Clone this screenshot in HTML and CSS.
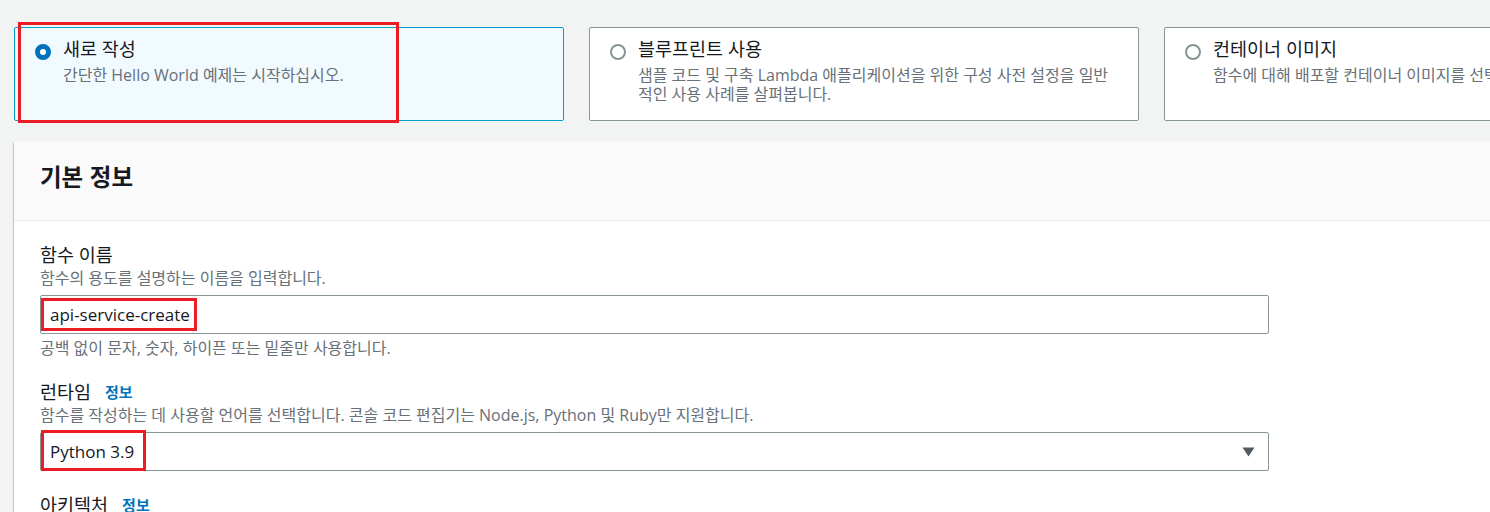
FILE: index.html
```html
<!DOCTYPE html>
<html lang="ko">
<head>
<meta charset="utf-8">
<title>함수 생성</title>
<link rel="stylesheet" href="styles.css">
</head>
<body>
<div class="page">
  <div class="tiles">
    <div class="tile tile--selected">
      <span class="radio radio--on"></span>
      <div class="tile-text">
        <div class="tile-title">새로 작성</div>
        <div class="tile-desc">간단한 Hello World 예제는 시작하십시오.</div>
      </div>
      <span class="mark mark--tile"></span>
    </div>
    <div class="tile">
      <span class="radio"></span>
      <div class="tile-text">
        <div class="tile-title">블루프린트 사용</div>
        <div class="tile-desc">샘플 코드 및 구축 Lambda 애플리케이션을 위한 구성 사전 설정을 일반 적인 사용 사례를 살펴봅니다.</div>
      </div>
    </div>
    <div class="tile">
      <span class="radio"></span>
      <div class="tile-text">
        <div class="tile-title">컨테이너 이미지</div>
        <div class="tile-desc">함수에 대해 배포할 컨테이너 이미지를 선택합니다.</div>
      </div>
    </div>
  </div>

  <section class="panel">
    <header class="panel-header">
      <h2 class="panel-title">기본 정보</h2>
    </header>
    <div class="panel-body">
      <div class="field">
        <div class="field-label">함수 이름</div>
        <div class="field-desc">함수의 용도를 설명하는 이름을 입력합니다.</div>
        <div class="control">
          <input class="text-input" type="text" value="api-service-create">
          <span class="mark mark--input"></span>
        </div>
        <div class="field-hint">공백 없이 문자, 숫자, 하이픈 또는 밑줄만 사용합니다.</div>
      </div>
      <div class="field">
        <div class="field-label">런타임 <a class="info-link">정보</a></div>
        <div class="field-desc">함수를 작성하는 데 사용할 언어를 선택합니다. 콘솔 코드 편집기는 Node.js, Python 및 Ruby만 지원합니다.</div>
        <div class="control">
          <div class="select">
            <span class="select-value">Python 3.9</span>
            <svg class="caret" width="13" height="10" viewBox="0 0 13 10"><path d="M0.5 0.5 H12.5 L6.5 9.5 Z" fill="#545b64"/></svg>
          </div>
          <span class="mark mark--select"></span>
        </div>
      </div>
      <div class="field">
        <div class="field-label">아키텍처 <a class="info-link">정보</a></div>
      </div>
    </div>
  </section>
</div>
</body>
</html>
```

FILE: styles.css
```css
html, body {
  margin: 0;
  padding: 0;
}
body {
  background: #f2f3f3;
  color: #16191f;
  font-family: "Open Sans", "Noto Sans CJK KR", sans-serif;
  overflow: hidden;
  width: 1490px;
  height: 512px;
}
.page {
  padding: 27px 0 0 14px;
  width: 1800px;
}
.tiles {
  display: grid;
  grid-template-columns: repeat(3, 550px);
  column-gap: 25px;
}
.tile {
  position: relative;
  box-sizing: border-box;
  height: 94px;
  border: 1px solid #879596;
  border-radius: 2px;
  background: #ffffff;
  padding: 10px 20px 0 20px;
  display: flex;
  align-items: flex-start;
  gap: 12px;
}
.tile--selected {
  border-color: #00a1c9;
  background: #f1faff;
}
.radio {
  flex: none;
  box-sizing: border-box;
  width: 16px;
  height: 16px;
  margin-top: 6px;
  border-radius: 50%;
  border: 2px solid #879596;
  background: #fff;
}
.radio--on {
  border: 5px solid #0073bb;
}
.tile-text {
  flex: 1;
  min-width: 0;
}
.tile-title {
  font-size: 18.5px;
  line-height: 22px;
  color: #16191f;
}
.tile-desc {
  margin-top: 6px;
  font-size: 16px;
  line-height: 19px;
  color: #687078;
}
.mark {
  position: absolute;
  box-sizing: border-box;
  border: 3px solid #ec1c24;
  pointer-events: none;
}
.mark--tile {
  left: 3px;
  top: -6px;
  width: 381px;
  height: 101px;
}
.panel {
  margin-top: 21px;
  width: 1700px;
  background: #ffffff;
  box-shadow: 0 1px 1px 0 rgba(0, 28, 36, 0.3), 1px 1px 1px 0 rgba(0, 28, 36, 0.15), -1px 1px 1px 0 rgba(0, 28, 36, 0.15);
}
.panel-header {
  background: #fafafa;
  border-bottom: 1px solid #eaeded;
  padding: 19px 26px 29px;
}
.panel-title {
  margin: 0;
  font-family: "Noto Sans CJK KR", sans-serif;
  font-size: 23.5px;
  line-height: 30px;
  font-weight: 700;
  color: #16191f;
}
.panel-body {
  padding: 22px 26px 0;
  display: flex;
  flex-direction: column;
  gap: 22px;
}
.field-label {
  font-size: 18.5px;
  line-height: 24px;
  color: #16191f;
  display: flex;
  align-items: center;
  gap: 14px;
}
.info-link {
  font-size: 15px;
  font-weight: 700;
  color: #0073bb;
}
.field-desc,
.field-hint {
  font-size: 16px;
  line-height: 20px;
  color: #687078;
}
.field-desc {
  margin-top: 1px;
}
.field-hint {
  margin-top: 4px;
}
.control {
  position: relative;
  width: 1229px;
  margin-top: 7px;
}
.text-input,
.select {
  box-sizing: border-box;
  width: 100%;
  height: 39px;
  border: 1px solid #879596;
  border-radius: 2px;
  background: #fff;
  padding: 0 13px 0 9px;
  font-family: "Open Sans", "Noto Sans CJK KR", sans-serif;
  font-size: 17px;
  color: #16191f;
  outline: none;
  margin: 0;
}
.select {
  display: flex;
  align-items: center;
  justify-content: space-between;
}
.caret {
  display: block;
}
.mark--input {
  left: 1px;
  top: 3px;
  width: 156px;
  height: 33px;
}
.mark--select {
  left: 1px;
  top: -2px;
  width: 105px;
  height: 41px;
}
```
